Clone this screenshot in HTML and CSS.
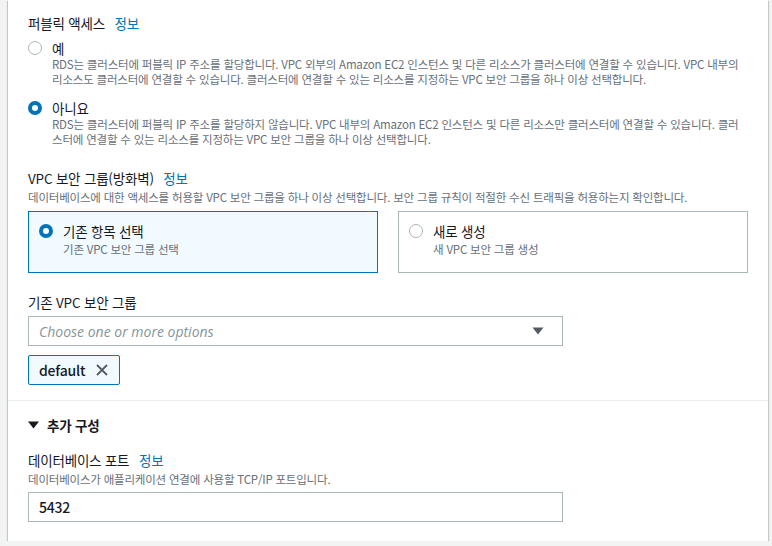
FILE: index.html
```html
<!DOCTYPE html>
<html lang="ko">
<head>
    <meta charset="UTF-8">
    <meta name="viewport" content="width=device-width, initial-scale=1.0">
    <title>데이터베이스 연결</title>
    <link rel="stylesheet" href="styles.css">
</head>
<body>
    <div class="panel">
        <div class="section">
            <div class="field-label">퍼블릭 액세스 <a class="info" href="#">정보</a></div>
            <div class="radio-group">
                <div class="radio-row">
                    <span class="radio"></span>
                    <div class="radio-text">
                        <div class="radio-title">예</div>
                        <div class="radio-desc">RDS는 클러스터에 퍼블릭 IP 주소를 할당합니다. VPC 외부의 Amazon EC2 인스턴스 및 다른 리소스가 클러스터에 연결할 수 있습니다. VPC 내부의<br>리소스도 클러스터에 연결할 수 있습니다. 클러스터에 연결할 수 있는 리소스를 지정하는 VPC 보안 그룹을 하나 이상 선택합니다.</div>
                    </div>
                </div>
                <div class="radio-row">
                    <span class="radio checked"></span>
                    <div class="radio-text">
                        <div class="radio-title">아니요</div>
                        <div class="radio-desc">RDS는 클러스터에 퍼블릭 IP 주소를 할당하지 않습니다. VPC 내부의 Amazon EC2 인스턴스 및 다른 리소스만 클러스터에 연결할 수 있습니다. 클러<br>스터에 연결할 수 있는 리소스를 지정하는 VPC 보안 그룹을 하나 이상 선택합니다.</div>
                    </div>
                </div>
            </div>

            <div class="field vpc-field">
                <div class="field-label">VPC 보안 그룹(방화벽) <a class="info" href="#">정보</a></div>
                <div class="field-desc">데이터베이스에 대한 액세스를 허용할 VPC 보안 그룹을 하나 이상 선택합니다. 보안 그룹 규칙이 적절한 수신 트래픽을 허용하는지 확인합니다.</div>
                <div class="tiles">
                    <div class="tile selected">
                        <span class="radio checked"></span>
                        <div class="radio-text">
                            <div class="radio-title">기존 항목 선택</div>
                            <div class="radio-desc">기존 VPC 보안 그룹 선택</div>
                        </div>
                    </div>
                    <div class="tile">
                        <span class="radio"></span>
                        <div class="radio-text">
                            <div class="radio-title">새로 생성</div>
                            <div class="radio-desc">새 VPC 보안 그룹 생성</div>
                        </div>
                    </div>
                </div>
            </div>

            <div class="field sg-field">
                <div class="field-label">기존 VPC 보안 그룹</div>
                <div class="select">
                    <span class="placeholder">Choose one or more options</span>
                    <svg class="caret" width="12" height="8" viewBox="0 0 12 8"><path d="M0.5 0.5h11L6 7.5z" fill="#545b64"/></svg>
                </div>
                <div class="token">
                    <span>default</span>
                    <svg width="14" height="14" viewBox="0 0 14 14"><path d="M2 2l10 10M12 2L2 12" stroke="#545b64" stroke-width="1.8" fill="none"/></svg>
                </div>
            </div>
        </div>

        <div class="section extra">
            <div class="expander">
                <svg width="11" height="8" viewBox="0 0 11 8"><path d="M0 0.5h11L5.5 7.5z" fill="#16191f"/></svg>
                <span>추가 구성</span>
            </div>
            <div class="field port-field">
                <div class="field-label">데이터베이스 포트 <a class="info" href="#">정보</a></div>
                <div class="field-desc">데이터베이스가 애플리케이션 연결에 사용할 TCP/IP 포트입니다.</div>
                <div class="input">5432</div>
            </div>
        </div>
    </div>
</body>
</html>
```

FILE: styles.css
```css
body {
    margin: 0;
    background-color: #f2f3f3;
    font-family: "Noto Sans CJK KR", "Noto Sans", sans-serif;
    color: #16191f;
    font-size: 13.5px;
    letter-spacing: -0.2px;
}
.panel {
    width: 760px;
    margin-left: 8px;
    height: 541px;
    box-sizing: border-box;
    background-color: #fff;
    box-shadow: 0 1px 1px 0 rgba(0, 28, 36, 0.3), 1px 1px 1px 0 rgba(0, 28, 36, 0.15), -1px 1px 1px 0 rgba(0, 28, 36, 0.15);
}
.section {
    padding: 12px 20px 15px;
    border-bottom: 1px solid #eaeded;
}
.section.extra {
    border-bottom: none;
    padding-top: 13px;
}
.field-label {
    line-height: 22px;
}
.info {
    color: #0073bb;
    text-decoration: none;
    margin-left: 6px;
}
.field-desc {
    font-size: 11.5px;
    line-height: 16px;
    color: #687078;
    white-space: nowrap;
}
.radio-group {
    margin-top: 5px;
}
.radio-row {
    display: flex;
    gap: 10px;
    margin-bottom: 12px;
}
.radio-row:last-child {
    margin-bottom: 0;
}
.radio {
    flex: none;
    width: 14px;
    height: 14px;
    box-sizing: border-box;
    border: 1.5px solid #aab7b8;
    border-radius: 50%;
    background-color: #fff;
    margin-top: 2px;
}
.radio.checked {
    border: 4px solid #0073bb;
}
.radio-title {
    line-height: 18px;
}
.radio-desc {
    font-size: 11.5px;
    line-height: 15px;
    color: #687078;
    white-space: nowrap;
}
.vpc-field {
    margin-top: 20px;
}
.tiles {
    display: grid;
    grid-template-columns: 350px 350px;
    gap: 20px;
    margin-top: 6px;
}
.tile {
    display: flex;
    gap: 10px;
    height: 62px;
    box-sizing: border-box;
    padding: 9px 10px;
    border: 1px solid #aab7b8;
}
.tile.selected {
    background-color: #f1faff;
    border-color: #0073bb;
}
.tile .radio {
    margin-top: 3px;
}
.tile .radio-title {
    line-height: 20px;
}
.tile .radio-desc {
    line-height: 16px;
}
.sg-field {
    margin-top: 18px;
}
.select, .input {
    width: 535px;
    height: 30px;
    box-sizing: border-box;
    border: 1px solid #aab7b8;
    display: flex;
    align-items: center;
    padding: 0 10px;
    margin-top: 3px;
}
.select {
    justify-content: space-between;
}
.placeholder {
    font-family: "Open Sans", sans-serif;
    font-style: italic;
    font-size: 14px;
    letter-spacing: 0;
    color: #879596;
}
.caret {
    margin-right: 8px;
}
.token {
    display: inline-flex;
    align-items: center;
    gap: 10px;
    height: 30px;
    box-sizing: border-box;
    padding: 0 10px;
    margin-top: 9px;
    background-color: #f1faff;
    border: 1px solid #0073bb;
    border-radius: 2px;
}
.token span {
    font-weight: 500;
    font-size: 14px;
}
.expander {
    display: flex;
    align-items: center;
    gap: 8px;
    font-weight: bold;
    line-height: 22px;
}
.port-field {
    margin-top: 13px;
}
.input {
    margin-top: 5px;
    font-weight: 500;
    font-size: 14px;
}
```
